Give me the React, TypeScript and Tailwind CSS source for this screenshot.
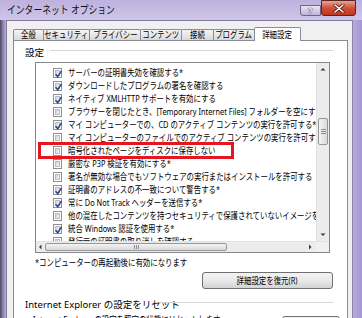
import React from 'react';

type Row = { label: string; checked: boolean };

const rows: Row[] = [
  { label: 'サーバーの証明書失効を確認する*', checked: true },
  { label: 'ダウンロードしたプログラムの署名を確認する', checked: true },
  { label: 'ネイティブ XMLHTTP サポートを有効にする', checked: true },
  { label: 'ブラウザーを閉じたとき、[Temporary Internet Files] フォルダーを空にする', checked: false },
  { label: 'マイ コンピューターでの、CD のアクティブ コンテンツの実行を許可する*', checked: true },
  { label: 'マイ コンピューターのファイルでのアクティブ コンテンツの実行を許可する*', checked: false },
  { label: '暗号化されたページをディスクに保存しない', checked: false },
  { label: '厳密な P3P 検証を有効にする*', checked: false },
  { label: '署名が無効な場合でもソフトウェアの実行またはインストールを許可する', checked: false },
  { label: '証明書のアドレスの不一致について警告する*', checked: true },
  { label: '常に Do Not Track ヘッダーを送信する*', checked: true },
  { label: '他の混在したコンテンツを持つセキュリティで保護されていないイメージをブロックする', checked: false },
  { label: '統合 Windows 認証を使用する*', checked: true },
  { label: '発行元の証明書の取り消しを確認する', checked: false },
];

const tabs = [
  { label: '全般', w: 'w-[31px]' },
  { label: 'セキュリティ', w: 'w-[47px]' },
  { label: 'プライバシー', w: 'w-[52px]' },
  { label: 'コンテンツ', w: 'w-[42px]' },
  { label: '接続', w: 'w-[33px]' },
  { label: 'プログラム', w: 'w-[42px]' },
];

function Checkbox({ checked }: { checked: boolean }) {
  return (
    <span className="relative w-[9px] h-[10px] shrink-0 border border-[#8e8f8f] bg-white p-px">
      <span className="block w-full h-full border border-[#b9bdc3] bg-gradient-to-br from-[#cdd1d7] to-[#f7f7f7]" />
      {checked && (
        <svg className="absolute left-0 top-0" width="9" height="10" viewBox="0 0 9 10">
          <path d="M1.6 5.2 L3.7 7.6 L7.6 1.9" fill="none" stroke="#2b4b8f" strokeWidth="1.6" />
        </svg>
      )}
    </span>
  );
}

function Arrow({ dir }: { dir: 'up' | 'down' | 'left' | 'right' }) {
  const d = {
    up: 'M0.5 3.5 L3 1 L5.5 3.5 Z',
    down: 'M0.5 1.5 L3 4 L5.5 1.5 Z',
    left: 'M3.5 0.5 L1 3 L3.5 5.5 Z',
    right: 'M2 0.5 L4.5 3 L2 5.5 Z',
  }[dir];
  return (
    <svg width="6" height="6" viewBox="0 0 6 6">
      <path d={d} fill="#3c3c3c" />
    </svg>
  );
}

function Label({ children, className = '' }: { children: React.ReactNode; className?: string }) {
  return (
    <span className={`whitespace-nowrap text-[9.5px] leading-[12px] scale-x-[0.78] ${className}`}>{children}</span>
  );
}

export default function App() {
  return (
    <div className="w-[362px] h-[318px] overflow-hidden flex flex-col bg-[#c5bbe1] text-black font-['Noto_Sans','Noto_Sans_CJK_JP',sans-serif]">
      {/* Title bar */}
      <div className="h-[20px] shrink-0 flex items-start justify-between pl-[7px] pr-[6px] bg-gradient-to-b from-[#bdb1de] to-[#cfc6e8]">
        <span className="mt-[3px] text-[11px] leading-[14px] whitespace-nowrap scale-x-[0.8] origin-left text-[#111]">
          インターネット オプション
        </span>
        <div className="flex items-start">
          <div className="mt-[5px] w-[21px] h-[11px] rounded-bl-[3px] border border-[#6f6784] bg-gradient-to-b from-[#ebe6f5] to-[#bfb3dc] flex items-center justify-center">
            <span className="text-[9px] leading-none font-bold text-[#f4f4f4] [text-shadow:0_0_1px_#333,0_0_1px_#333]">?</span>
          </div>
          <div className="w-[35px] h-[16px] rounded-b-[3px] border border-[#5a2424] bg-gradient-to-b from-[#e7a293] via-[#d24e38] to-[#c2361e] flex items-center justify-center">
            <svg width="12" height="9" viewBox="0 0 12 9">
              <path d="M2 1 L10 8 M10 1 L2 8" stroke="#4a1a14" strokeWidth="3" strokeLinecap="round" />
              <path d="M2 1 L10 8 M10 1 L2 8" stroke="#ffffff" strokeWidth="1.6" strokeLinecap="round" />
            </svg>
          </div>
        </div>
      </div>

      <div className="flex flex-1 min-h-0">
        {/* Left frame */}
        <div className="w-[6px] shrink-0 bg-gradient-to-r from-[#4f4a5c] via-[#8c80ad] to-[#b9addb]" />

        {/* Client area */}
        <div className="flex-1 min-w-0 bg-[#f0f0f0] border-l border-t border-[#837b9c] pt-[6px] pl-[6px] pr-[4px]">
          {/* Tabs */}
          <div className="flex items-end h-[14px]">
            {tabs.map((t, i) => (
              <div
                key={t.label}
                className={`${t.w} ${i > 0 ? '-ml-px' : ''} h-[11px] mb-px flex items-center justify-center border-t border-l border-r border-[#898c95] rounded-t-[2px] bg-gradient-to-b from-[#f5f5f5] to-[#d9d9d9]`}
              >
                <Label className="origin-center">{t.label}</Label>
              </div>
            ))}
            <div className="relative z-10 -ml-px w-[47px] h-[14px] flex items-start justify-center pt-[1px] border-t border-l border-r border-[#898c95] rounded-t-[2px] bg-white">
              <Label className="origin-center">詳細設定</Label>
            </div>
          </div>

          {/* Tab panel */}
          <div className="-mt-px h-[290px] bg-white border border-[#898c95] pl-[11px] pr-[14px]">
            {/* 設定 group header */}
            <div className="mt-[2px] h-[14px] flex items-center">
              <div className="w-[25px] shrink-0">
                <Label className="origin-left">設定</Label>
              </div>
              <div className="flex-1 h-px bg-[#d5d5d5]" />
            </div>

            {/* Settings list */}
            <div className="relative mt-[5px] ml-[10px] mr-[3px] h-[191px] border border-[#828790] bg-white flex flex-col">
              <div className="flex flex-1 min-h-0">
                <div className="flex-1 min-w-0 overflow-hidden pt-[3px] pl-[17px]">
                  {rows.map((r) => (
                    <div key={r.label} className="h-[13px] flex items-center gap-[6px]">
                      <Checkbox checked={r.checked} />
                      <Label className="origin-left">{r.label}</Label>
                    </div>
                  ))}
                </div>
                {/* vertical scrollbar */}
                <div className="w-[13px] shrink-0 flex flex-col bg-[#ececec] border-l border-[#e2e2e2]">
                  <div className="h-[13px] flex items-center justify-center">
                    <Arrow dir="up" />
                  </div>
                  <div className="flex-1 px-px">
                    <div className="mt-[42px] h-[27px] rounded-[2px] border border-[#979797] bg-gradient-to-r from-[#f4f4f4] to-[#d9d9d9] flex flex-col items-center justify-center gap-px">
                      <div className="w-[5px] h-px bg-[#8d8d8d]" />
                      <div className="w-[5px] h-px bg-[#8d8d8d]" />
                      <div className="w-[5px] h-px bg-[#8d8d8d]" />
                    </div>
                  </div>
                  <div className="h-[13px] flex items-center justify-center">
                    <Arrow dir="down" />
                  </div>
                </div>
              </div>
              {/* horizontal scrollbar */}
              <div className="h-[11px] shrink-0 flex bg-[#ececec] border-t border-[#e2e2e2]">
                <div className="w-[9px] flex items-center justify-center">
                  <Arrow dir="left" />
                </div>
                <div className="flex-1 flex py-px">
                  <div className="w-[182px] rounded-[2px] border border-[#979797] bg-gradient-to-b from-[#f4f4f4] to-[#d9d9d9] flex items-center justify-center gap-px">
                    <div className="w-px h-[4px] bg-[#8d8d8d]" />
                    <div className="w-px h-[4px] bg-[#8d8d8d]" />
                    <div className="w-px h-[4px] bg-[#8d8d8d]" />
                  </div>
                </div>
                <div className="w-[13px] flex items-center justify-center">
                  <Arrow dir="right" />
                </div>
                <div className="w-[13px] bg-[#f0f0f0]" />
              </div>

              {/* highlight */}
              <div className="absolute left-[2px] top-[79px] w-[196px] h-[17px] border-[3px] border-[#e5161e]" />
            </div>

            {/* note */}
            <div className="mt-[4px] ml-[10px] h-[12px] flex items-center">
              <Label className="origin-left">*コンピューターの再起動後に有効になります</Label>
            </div>

            {/* restore button */}
            <div className="mt-[3px] flex justify-end">
              <div className="w-[131px] h-[17px] rounded-[3px] border border-[#707070] bg-gradient-to-b from-[#f3f3f3] via-[#e9e9e9] to-[#d4d4d4] flex items-center justify-center">
                <Label className="origin-center">詳細設定を復元(R)</Label>
              </div>
            </div>

            {/* reset group header */}
            <div className="mt-[7px] h-[12px] flex items-center">
              <div className="w-[134px] shrink-0">
                <Label className="origin-left">Internet Explorer の設定をリセット</Label>
              </div>
              <div className="flex-1 h-px bg-[#d5d5d5]" />
            </div>

            <div className="mt-[8px] flex items-start justify-between">
              <div className="-mt-[2px] ml-[8px] h-[12px] flex items-center">
                <Label className="origin-left">Internet Explorer の設定を既定の状態にリセットします。</Label>
              </div>
              <div className="w-[77px] h-[17px] rounded-[3px] border border-[#707070] bg-gradient-to-b from-[#f3f3f3] via-[#e9e9e9] to-[#d4d4d4] flex items-center justify-center">
                <Label className="origin-center">リセット(S)...</Label>
              </div>
            </div>
          </div>
        </div>

        {/* Right frame */}
        <div className="w-[10px] shrink-0 border-l border-[#8a82a3] bg-gradient-to-r from-[#b7aadc] to-[#a597d0]" />
      </div>
    </div>
  );
}
